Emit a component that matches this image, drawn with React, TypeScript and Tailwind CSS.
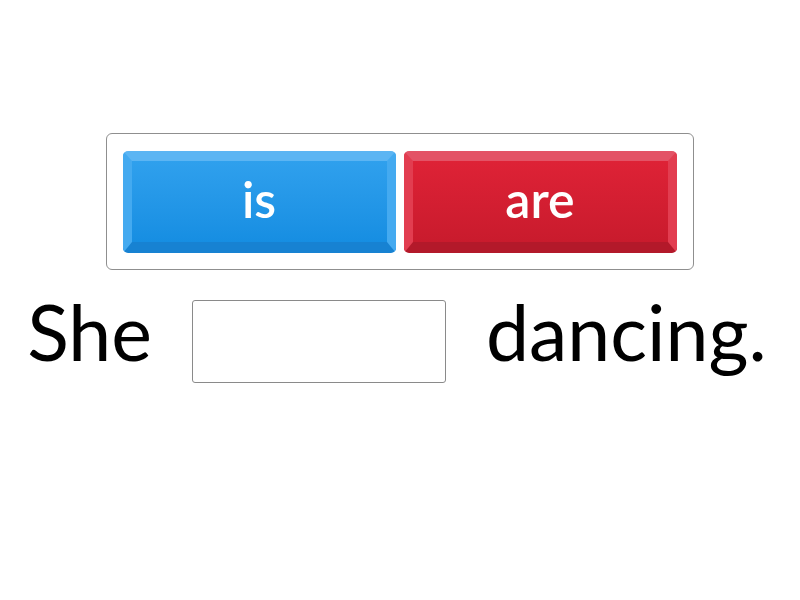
import React from "react";

export default function App() {
  return (
    <div
      className="w-[800px] h-[600px] bg-white flex flex-col items-center pt-[133px]"
      style={{ fontFamily: "Lato, 'Noto Sans', sans-serif" }}
    >
      <div className="ml-[-1px] flex gap-2 rounded-[6px] border border-[#8f8f8f] px-4 pt-[17px] pb-[16px]">
        <div className="flex h-[102px] w-[273px] items-center justify-center rounded-[5px] border-x-[9px] border-t-[10px] border-b-[11px] border-x-[#44aaf0] border-t-[#5cb5f3] border-b-[#1782d2] bg-gradient-to-b from-[#2fa0ed] to-[#168ee2] pb-[6px] text-[50px] font-semibold leading-none text-white">
          is
        </div>
        <div className="flex h-[102px] w-[273px] items-center justify-center rounded-[5px] border-x-[9px] border-t-[10px] border-b-[11px] border-x-[#e23d50] border-t-[#e35366] border-b-[#b3192a] bg-gradient-to-b from-[#de2236] to-[#c91b2d] pb-[6px] text-[50px] font-semibold leading-none text-white">
          are
        </div>
      </div>
      <div className="mt-[23px] ml-[-6px] flex items-center gap-[40px] text-[77px] leading-none text-black">
        <span className="pb-[20px]">She</span>
        <div className="h-[83px] w-[254px] rounded-[3px] border border-[#8a8a8a] bg-white" />
        <span className="pb-[20px]">dancing.</span>
      </div>
    </div>
  );
}
